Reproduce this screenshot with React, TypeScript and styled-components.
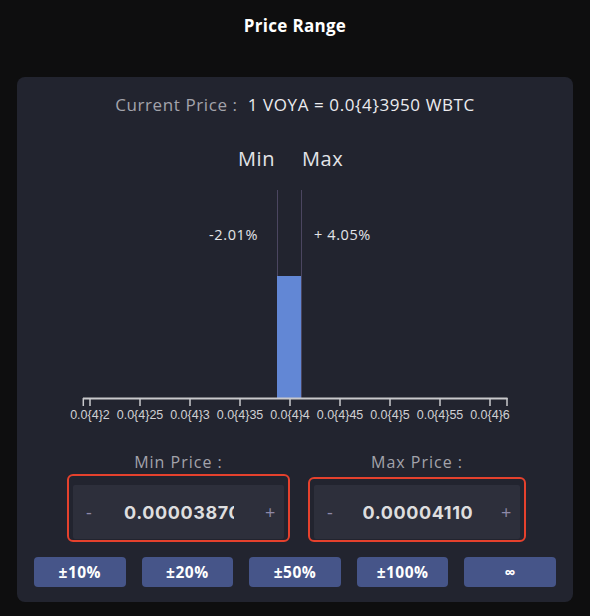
import styled, { createGlobalStyle } from 'styled-components';

const GlobalStyle = createGlobalStyle`
	body {
		margin: 0;
		background: #0e0e0f;
		font-family: 'Open Sans', 'Liberation Sans', sans-serif;
	}
`;

const ticks = [66.3, 73, 123, 173, 223, 273, 323, 373, 423, 473, 490];
const labels = ['2', '25', '3', '35', '4', '45', '5', '55', '6'];
const presets = ['±10%', '±20%', '±50%', '±100%', '∞'];

const RangeChart = () => (
	<Chart width='556' height='300' viewBox='0 0 556 300'>
		<ChartText x='258' y='36' textAnchor='end' $size={20}>
			Min
		</ChartText>
		<ChartText x='285' y='36' $size={20}>
			Max
		</ChartText>
		<ChartText x='241' y='110' textAnchor='end' $size={14.5}>
			-2.01%
		</ChartText>
		<ChartText x='297' y='110' $size={14.5}>
			+ 4.05%
		</ChartText>
		<line x1='260.5' y1='60' x2='260.5' y2='268' stroke='#4b4660' />
		<line x1='284.5' y1='60' x2='284.5' y2='268' stroke='#4b4660' />
		<rect x='260' y='146' width='24' height='122' fill='#6287d5' />
		<line x1='66' y1='268.5' x2='490.5' y2='268.5' stroke='#c9c9cc' strokeWidth='2' />
		{ticks.map((x) => (
			<line key={x} x1={x} y1='268' x2={x} y2='276' stroke='#c9c9cc' strokeWidth='1.5' />
		))}
		{labels.map((l, i) => (
			<AxisLabel key={l} x={73 + i * 50} y='289' textAnchor='middle'>
				{`0.0{4}${l}`}
			</AxisLabel>
		))}
	</Chart>
);

const PriceInput = ({ label, value, padTop }: { label: string; value: string; padTop: number }) => (
	<Column>
		<FieldLabel>{label}</FieldLabel>
		<Highlight $padTop={padTop}>
			<Stepper>
				<StepButton>-</StepButton>
				<ValueInput readOnly value={value} />
				<StepButton>+</StepButton>
			</Stepper>
		</Highlight>
	</Column>
);

const App = () => {
	return (
		<>
			<GlobalStyle />
			<Page>
				<Title>Price Range</Title>
				<Card>
					<CurrentPrice>
						<Muted>Current Price :</Muted>
						<span>1 VOYA = 0.0{'{4}'}3950 WBTC</span>
					</CurrentPrice>
					<RangeChart />
					<Inputs>
						<PriceInput label='Min Price :' value='0.00003870' padTop={9} />
						<PriceInput label='Max Price :' value='0.00004110' padTop={6} />
					</Inputs>
					<Presets>
						{presets.map((p) => (
							<Preset key={p}>{p}</Preset>
						))}
					</Presets>
				</Card>
			</Page>
		</>
	);
};

const Page = styled.div`
	width: 590px;
	height: 616px;
	padding-top: 15px;
	box-sizing: border-box;
`;

const Title = styled.h1`
	margin: 0;
	height: 22px;
	line-height: 22px;
	text-align: center;
	color: #ffffff;
	font-size: 17px;
	font-weight: 700;
	letter-spacing: 0.3px;
`;

const Card = styled.div`
	margin: 40px 17px 0;
	padding: 18px 17px 15px;
	background: #22242f;
	border-radius: 8px;
`;

const CurrentPrice = styled.div`
	display: flex;
	justify-content: center;
	gap: 10px;
	line-height: 20px;
	font-size: 17px;
	letter-spacing: 0.6px;
	color: #ececef;
`;

const Muted = styled.span`
	color: #a3a3ab;
`;

const Chart = styled.svg`
	display: block;
	margin: 15px -17px 0;
`;

const ChartText = styled.text<{ $size: number }>`
	font-family: 'Open Sans', 'Liberation Sans', sans-serif;
	font-size: ${(p) => p.$size}px;
	letter-spacing: 0.6px;
	fill: #e4e4e8;
`;

const AxisLabel = styled.text`
	font-family: 'Liberation Sans', Arial, sans-serif;
	font-size: 12.5px;
	fill: #d0d0d4;
`;

const Inputs = styled.div`
	display: grid;
	grid-template-columns: 223px 218px;
	column-gap: 18px;
	margin: 22px 0 0 33px;
`;

const Column = styled.div`
	display: flex;
	flex-direction: column;
	align-items: stretch;
`;

const FieldLabel = styled.div`
	text-align: center;
	line-height: 20px;
	font-size: 16px;
	letter-spacing: 1px;
	color: #a3a3ab;
	margin-bottom: 2px;
`;

const Highlight = styled.div<{ $padTop: number }>`
	margin-top: ${(p) => 9 - p.$padTop}px;
	padding: ${(p) => p.$padTop}px 4px 1px;
	border: 2px solid #e5412d;
	border-radius: 6px;
`;

const Stepper = styled.div`
	display: flex;
	align-items: center;
	justify-content: space-between;
	height: 54px;
	padding: 0 11px 0 12px;
	background: #2d2f3b;
	border-radius: 2px;
`;

const StepButton = styled.span`
	width: 8px;
	text-align: center;
	font-size: 18px;
	color: #8e89a9;
	cursor: pointer;
`;

const ValueInput = styled.input`
	width: 110px;
	padding: 0;
	border: none;
	outline: none;
	background: transparent;
	color: #dededf;
	font-family: Inter, 'Open Sans', sans-serif;
	font-size: 18px;
	font-weight: 700;
	letter-spacing: 0.6px;
	text-align: center;
`;

const Presets = styled.div`
	display: grid;
	grid-template-columns: repeat(5, 1fr);
	gap: 16px;
	margin-top: 15px;
`;

const Preset = styled.button`
	height: 30px;
	border: none;
	border-radius: 4px;
	background: #465589;
	color: #ffffff;
	font-family: 'Open Sans', 'Liberation Sans', sans-serif;
	font-size: 15.5px;
	font-weight: 700;
	letter-spacing: 0.5px;
	cursor: pointer;
`;

export default App;
